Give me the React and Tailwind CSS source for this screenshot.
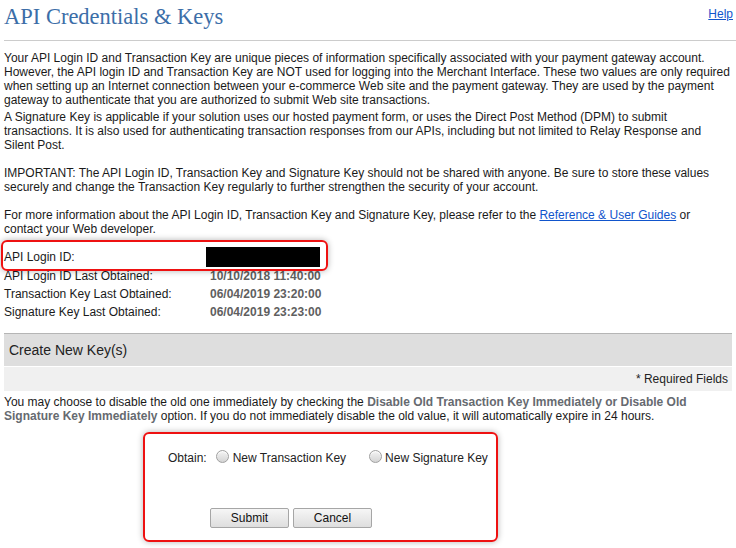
import React from "react";

function Radio() {
  return (
    <span className="inline-block w-[13px] h-[13px] rounded-full border border-[#a0a0a0] bg-gradient-to-b from-[#f4f4f4] to-[#d4d4d4] shadow-[inset_0_1px_1px_rgba(255,255,255,0.9)]" />
  );
}

function Btn({ children }) {
  return (
    <button className="w-[79px] h-[20px] border border-[#a6a6a6] rounded-[2px] bg-gradient-to-b from-[#f6f6f6] to-[#dedede] text-[12px] leading-[18px] text-[#111] font-['Liberation_Sans',sans-serif]">
      {children}
    </button>
  );
}

export default function App() {
  return (
    <div className="relative w-[736px] h-[548px] overflow-hidden bg-white font-['Liberation_Sans',Arial,sans-serif] text-[12px] text-[#1a1a1a]">
      {/* header */}
      <div className="flex justify-between items-start h-[40px] pl-[4px] pr-[3px]">
        <h1 className="pt-[3px] leading-[28px] text-[22.5px] text-[#3c6ea8] font-['Liberation_Serif',Georgia,serif] font-normal">
          API Credentials &amp; Keys
        </h1>
        <a className="pt-[7px] leading-[14px] text-[#1155cc] underline">Help</a>
      </div>
      <div className="ml-[4px] h-px bg-[#cccccc]" />

      <div className="pl-[4px] pr-[4px] leading-[14px]">
        <p className="mt-[10px]">
          Your API Login ID and Transaction Key are unique pieces of information specifically associated with your payment gateway account.
          <br />
          However, the API login ID and Transaction Key are NOT used for logging into the Merchant Interface. These two values are only required
          <br />
          when setting up an Internet connection between your e-commerce Web site and the payment gateway. They are used by the payment
          <br />
          gateway to authenticate that you are authorized to submit Web site transactions.
        </p>
        <p className="mt-[3px]">
          A Signature Key is applicable if your solution uses our hosted payment form, or uses the Direct Post Method (DPM) to submit
          <br />
          transactions. It is also used for authenticating transaction responses from our APIs, including but not limited to Relay Response and
          <br />
          Silent Post.
          <br />
          <br />
          IMPORTANT: The API Login ID, Transaction Key and Signature Key should not be shared with anyone. Be sure to store these values
          <br />
          securely and change the Transaction Key regularly to further strengthen the security of your account.
          <br />
          <br />
          For more information about the API Login ID, Transaction Key and Signature Key, please refer to the{" "}
          <a className="text-[#1155cc] underline">Reference &amp; User Guides</a> or
          <br />
          contact your Web developer.
        </p>
      </div>

      {/* info rows */}
      <div className="mt-[11px] pl-[4px]">
        <div className="flex items-center h-[20px]">
          <span className="w-[202px]">API Login ID:</span>
          <span className="w-[114px] h-[20px] bg-black" />
        </div>
        <div className="flex items-center h-[18px]">
          <span className="w-[206px]">API Login ID Last Obtained:</span>
          <span className="font-bold text-[#5f5f5f]">10/10/2018 11:40:00</span>
        </div>
        <div className="flex items-center h-[18px]">
          <span className="w-[206px]">Transaction Key Last Obtained:</span>
          <span className="font-bold text-[#5f5f5f]">06/04/2019 23:20:00</span>
        </div>
        <div className="flex items-center h-[18px]">
          <span className="w-[206px]">Signature Key Last Obtained:</span>
          <span className="font-bold text-[#5f5f5f]">06/04/2019 23:23:00</span>
        </div>
      </div>

      {/* section header */}
      <div className="mt-[12px] ml-[4px] mr-[4px]">
        <div className="h-[33px] border-t border-[#b5b5b5] bg-[#dedede] flex items-center pl-[5px] text-[14px] text-[#222]">
          Create New Key(s)
        </div>
        <div className="h-px bg-white" />
        <div className="h-[24px] bg-[#f0f0f0] flex items-center justify-end pr-[4px] text-[#222]">
          * Required Fields
        </div>
      </div>

      <p className="mt-[4px] pl-[4px] leading-[14px]">
        You may choose to disable the old one immediately by checking the{" "}
        <b className="text-[#666a70]">Disable Old Transaction Key Immediately or Disable Old</b>
        <br />
        <b className="text-[#666a70]">Signature Key Immediately</b> option. If you do not immediately disable the old value, it will automatically expire in 24 hours.
      </p>

      {/* form */}
      <div className="mt-[26px] pl-[168px] flex items-center h-[18px] text-[#222]">
        <span>Obtain:</span>
        <span className="ml-[9px] -mt-[3px] flex"><Radio /></span>
        <span className="ml-[4px]">New Transaction Key</span>
        <span className="ml-[23px] -mt-[3px] flex"><Radio /></span>
        <span className="ml-[3px]">New Signature Key</span>
      </div>
      <div className="mt-[41px] pl-[210px] flex gap-[4px]">
        <Btn>Submit</Btn>
        <Btn>Cancel</Btn>
      </div>

      {/* annotation overlays */}
      <div className="absolute left-[1px] top-[240px] w-[327px] h-[31px] rounded-[6px] border-2 border-[#ee1111] shadow-[0_0_6px_rgba(0,0,0,0.3)]" />
      <div className="absolute left-[143px] top-[432px] w-[355px] h-[110px] rounded-[6px] border-2 border-[#ee1111] shadow-[0_0_6px_rgba(0,0,0,0.3)]" />
    </div>
  );
}
